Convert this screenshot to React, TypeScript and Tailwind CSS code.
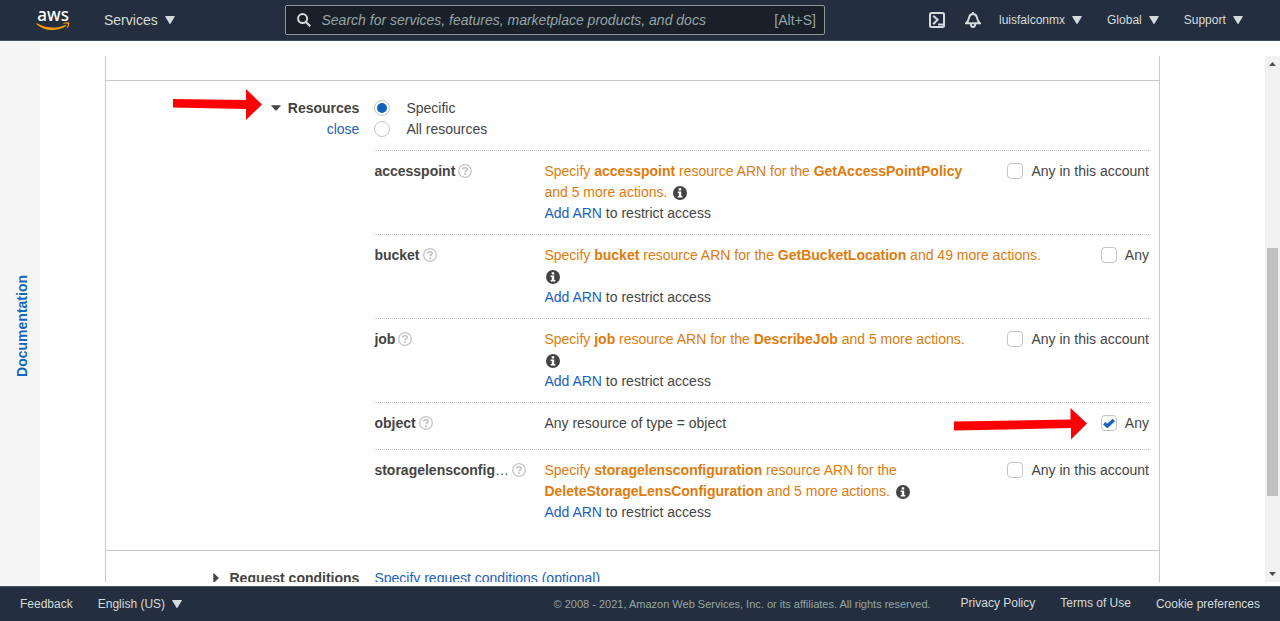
import type { ReactNode } from "react";

function Caret({ className = "" }: { className?: string }) {
  return (
    <svg className={`shrink-0 ${className}`} viewBox="0 0 10 8" preserveAspectRatio="none" fill="#d5dbdb">
      <path d="M.7 0h8.600q.7 0 .4.700L5.700 7.500q-.7.900-1.400 0L.3.700Q0 0 .7 0Z" />
    </svg>
  );
}

function AwsLogo() {
  return (
    <svg className="block h-[22px] w-[36px]" viewBox="0 0 36 22">
      <text
        x="1.300"
        y="12"
        textLength="31.600"
        lengthAdjust="spacingAndGlyphs"
        fontFamily="Noto Sans, sans-serif"
        fontWeight="500"
        fontSize="18.500"
        fill="#fff"
      >
        aws
      </text>
      <path
        d="M.9 14.300c4.700 2.600 10.200 4.300 16 4.300 4.200 0 8.500-.9 12.700-2.600.6-.3 1.200.4.500.9-3.700 2.500-9 4.100-13.600 4.100C10.200 21 4.600 18.800.4 14.900c-.3-.3 0-.8.5-.6Z"
        fill="#f90"
      />
      <path
        d="M31.700 14.900c-.5-.6-3.200-.3-4.400-.2-.4.100-.4-.3-.1-.5 2.100-1.500 5.700-1.100 6.100-.6.4.500-.1 4.100-2.100 5.800-.3.300-.6.100-.5-.2.500-1.100 1.500-3.700 1-4.300Z"
        fill="#f90"
      />
    </svg>
  );
}

function InfoIcon({ className = "" }: { className?: string }) {
  return (
    <svg className={`relative top-px -mt-[2px] inline-block h-[14px] w-[14px] ${className}`} viewBox="0 0 14 14">
      <circle cx="7" cy="7" r="7" fill="#444" />
      <path d="M5.700 2.300h2.500v2.100H5.700ZM4.700 5.400h3.500v4.700h1.100v1.500H4.700v-1.500h1.100V6.900H4.700Z" fill="#fff" />
    </svg>
  );
}

function HelpIcon() {
  return (
    <svg className="mt-[3px] h-[14px] w-[14px] shrink-0" viewBox="0 0 14 14" fill="none" stroke="#c6c6c6">
      <circle cx="7" cy="7" r="6.350" strokeWidth="1.300" />
      <path d="M4.700 5.500c.1-1.200.9-1.800 2.200-1.800s2.200.7 2.200 1.700c0 1.300-2 1.400-2 2.900" strokeWidth="1.800" />
      <path d="M7.100 9.200v1.800" strokeWidth="1.900" />
    </svg>
  );
}

function Checkbox({ checked, label }: { checked?: boolean; label: string }) {
  return (
    <label className="flex shrink-0 items-start whitespace-nowrap">
      <span className="mr-2 mt-[2px] h-4 w-4 rounded-[4px] border border-[#c4c4c4] bg-white">
        {checked && (
          <svg className="block h-[14px] w-[14px]" viewBox="0 0 14 14" fill="none" stroke="#1166bb" strokeWidth="3.400">
            <path d="M2.200 7.200 5.400 10 11.800 3.900" />
          </svg>
        )}
      </span>
      {label}
    </label>
  );
}

function Radio({ checked, label }: { checked?: boolean; label: string }) {
  return (
    <label className="flex items-start">
      <span className="mr-4 mt-[2px] flex h-4 w-4 items-center justify-center rounded-full border border-[#c4c4c4]">
        {checked && <span className="h-[10px] w-[10px] rounded-full bg-[#1166bb]" />}
      </span>
      {label}
    </label>
  );
}

function AddArn() {
  return (
    <div>
      <a className="text-[#1b60c0]">Add ARN</a> to restrict access
    </div>
  );
}

type RowProps = { name: string; wide?: boolean; any: string; checked?: boolean; children: ReactNode };

function ResourceRow({ name, wide, any, checked, children }: RowProps) {
  return (
    <div className="flex border-t border-dotted border-[#bbb] pt-[10px]">
      <div className="flex w-[170px] shrink-0">
        <span
          className={
            wide
              ? "mr-[3px] w-[135px] overflow-hidden whitespace-nowrap font-bold"
              : "mr-[3px] whitespace-nowrap font-bold"
          }
        >
          {name}
          {wide && <span className="font-normal">…</span>}
        </span>
        <HelpIcon />
      </div>
      <div className="min-w-0 flex-1">{children}</div>
      <Checkbox checked={checked} label={any} />
    </div>
  );
}

function Header() {
  return (
    <header className="flex h-[41px] shrink-0 border-b border-[#48525f] bg-[#232f3e] pl-9 text-[#d5dbdb]">
      <div className="w-[68px] pt-[9px]">
        <AwsLogo />
      </div>
      <div className="flex w-[181px] items-center text-[14px]">
        Services
        <Caret className="ml-[7px] h-[8px] w-[10px]" />
      </div>
      <div className="mt-[5px] flex h-[30px] w-[540px] items-center rounded-[2px] border border-[#8b9698] bg-[#1a2029] pr-[8px] pl-[11px] text-[14px] text-[#95a5a6]">
        <svg className="h-[14px] w-[14px]" viewBox="0 0 14 14" fill="none" stroke="#d5dbdb" strokeWidth="2">
          <circle cx="5.600" cy="5.600" r="4.500" />
          <path d="m9 9 4.300 4.300" strokeWidth="2.200" />
        </svg>
        <span className="ml-[10.500px] flex-1 italic">Search for services, features, marketplace products, and docs</span>
        <span>[Alt+S]</span>
      </div>
      <div className="ml-[104px] flex flex-1 items-center text-[12px]">
        <svg className="h-4 w-4" viewBox="0 0 16 16" fill="none" stroke="#d5dbdb" strokeWidth="2">
          <rect x="1" y="1" width="14" height="14" rx="1.500" />
          <path d="m4.200 3.700 4.400 4.100-4.400 4.400M9 12.500h5" strokeWidth="2" />
        </svg>
        <svg className="ml-5 h-4 w-4" viewBox="0 0 16 16" fill="none" stroke="#d5dbdb" strokeWidth="1.900">
          <path d="M1 11.200h14c-2.300-1.600-2.700-3.600-3.100-5.700C11.500 3.300 10.200 2 8 2S4.500 3.300 4.100 5.500C3.700 7.600 3.300 9.600 1 11.200ZM8 0v2M5.700 11.500c0 4.700 4.600 4.700 4.600 0" />
        </svg>
        <span className="ml-[18px]">luisfalconmx</span>
        <Caret className="ml-[7px] h-[8px] w-[10px]" />
        <span className="ml-[25px]">Global</span>
        <Caret className="ml-[7px] h-[8px] w-[10px]" />
        <span className="ml-[25px]">Support</span>
        <Caret className="ml-[7px] h-[8px] w-[10px]" />
      </div>
    </header>
  );
}

function Footer() {
  return (
    <footer className="flex h-[35px] shrink-0 items-center border-t border-[#4b5563] bg-[#232f3e] px-5 text-[12px] text-[#d5dbdb]">
      <span>Feedback</span>
      <span className="ml-[25px]">English (US)</span>
      <Caret className="ml-[7px] h-[8px] w-[10px]" />
      <span className="ml-auto text-[11px] text-[#95a5a6]">
        © 2008 - 2021, Amazon Web Services, Inc. or its affiliates. All rights reserved.
      </span>
      <span className="-mt-[2px] ml-[30px]">Privacy Policy</span>
      <span className="-mt-[2px] ml-[25px]">Terms of Use</span>
      <span className="ml-[25px]">Cookie preferences</span>
    </footer>
  );
}

function RedArrow({ className, points }: { className: string; points: string }) {
  return (
    <svg className={`absolute ${className}`}>
      <polygon points={points} fill="#f00" />
    </svg>
  );
}

export default function App() {
  return (
    <div className="relative flex h-[621px] w-[1280px] flex-col overflow-hidden bg-white font-['Liberation_Sans',Arial,sans-serif] text-[14px] leading-[21px] text-[#444]">
      <Header />
      <div className="flex h-[545px] shrink-0">
        <aside className="flex w-10 items-center justify-center bg-[#f5f5f5]">
          <span className="ml-1 mt-[25px] rotate-180 font-bold text-[#1166bb] [writing-mode:vertical-rl]">
            Documentation
          </span>
        </aside>
        <main className="mb-1 mt-[15px] flex flex-1 overflow-hidden pl-[65px]">
          <div className="w-[1055px] shrink-0 border-x border-[#c8c8c8]">
            <div className="h-6" />
            <section className="flex h-[470px] border-t border-[#c8c8c8] pt-[17px]">
              <div className="w-[253.400px] text-right">
                <div className="flex items-center justify-end font-bold">
                  <svg className="-mt-px mr-[7px] h-[6px] w-[10px]" viewBox="0 0 10 6" fill="#444">
                    <path d="M.5.300h9q.5 0 .2.500L5.500 5.400q-.5.400-1 0L.3.800Q0 .300.5.300Z" />
                  </svg>
                  Resources
                </div>
                <a className="text-[#1b60c0]">close</a>
              </div>
              <div className="ml-[15px] w-[774.600px]">
                <div className="mb-[10px]">
                  <Radio checked label="Specific" />
                  <Radio label="All resources" />
                </div>
                <div className="flex flex-col">
                  <div className="h-[84px]">
                    <ResourceRow name="accesspoint" any="Any in this account">
                      <div className="w-[430px] text-[#e07b0c]">
                        Specify <b>accesspoint</b> resource ARN for the <b>GetAccessPointPolicy</b>
                        <br />
                        and 5 more actions. <InfoIcon className="ml-[2px]" />
                      </div>
                      <AddArn />
                    </ResourceRow>
                  </div>
                  <div className="h-[84px]">
                    <ResourceRow name="bucket" any="Any">
                      <div className="h-[42px] text-[#e07b0c]">
                        Specify <b>bucket</b> resource ARN for the <b>GetBucketLocation</b> and 49 more actions.
                        <br />
                        <InfoIcon className="ml-[2px]" />
                      </div>
                      <AddArn />
                    </ResourceRow>
                  </div>
                  <div className="h-[84px]">
                    <ResourceRow name="job" any="Any in this account">
                      <div className="h-[42px] text-[#e07b0c]">
                        Specify <b>job</b> resource ARN for the <b>DescribeJob</b> and 5 more actions.
                        <br />
                        <InfoIcon className="ml-[2px]" />
                      </div>
                      <AddArn />
                    </ResourceRow>
                  </div>
                  <div className="h-[47px]">
                    <ResourceRow name="object" any="Any" checked>
                      Any resource of type = object
                    </ResourceRow>
                  </div>
                  <ResourceRow name="storagelensconfig" wide any="Any in this account">
                    <div className="w-[430px] text-[#e07b0c]">
                      Specify <b>storagelensconfiguration</b> resource ARN for the
                      <br />
                      <b>DeleteStorageLensConfiguration</b> and 5 more actions. <InfoIcon className="ml-[2px]" />
                    </div>
                    <AddArn />
                  </ResourceRow>
                </div>
              </div>
            </section>
            <section className="flex border-t border-[#c8c8c8] pt-[17px]">
              <div className="flex w-[253.400px] items-center justify-end font-bold">
                <svg className="-mt-px mr-[10px] h-[10px] w-[6px]" viewBox="0 0 6 10" fill="#444">
                  <path d="M.3.500q0-.5.500-.2l4.600 4.200q.4.500 0 1L.8 9.700q-.5.300-.5-.2Z" />
                </svg>
                Request conditions
              </div>
              <a className="ml-[15px] text-[#1b60c0]">Specify request conditions (optional)</a>
            </section>
          </div>
          <div className="ml-auto flex w-[15px] flex-col items-center bg-[#f1f1f1]">
            <svg className="mt-[6px] h-[4px] w-[7px]" viewBox="0 0 7 4" fill="#505050">
              <path d="M3.500 0 7 4H0Z" />
            </svg>
            <div className="mt-[182px] h-[248px] w-[11px] bg-[#c1c1c1]" />
            <svg className="mt-auto mb-[6px] h-[4px] w-[7px]" viewBox="0 0 7 4" fill="#505050">
              <path d="M0 0h7L3.500 4Z" />
            </svg>
          </div>
        </main>
      </div>
      <Footer />
      <RedArrow className="left-[173px] top-[89px] h-[32px] w-[90px]" points="0,10 73,11 73,0 89,15.500 73,31 73,20 0,18.500" />
      <RedArrow className="left-[954px] top-[408px] h-[32px] w-[134px]" points="0,13.500 116.500,11.500 116.500,0 133,15.500 117,31.500 117,20 0,22.500" />
    </div>
  );
}
